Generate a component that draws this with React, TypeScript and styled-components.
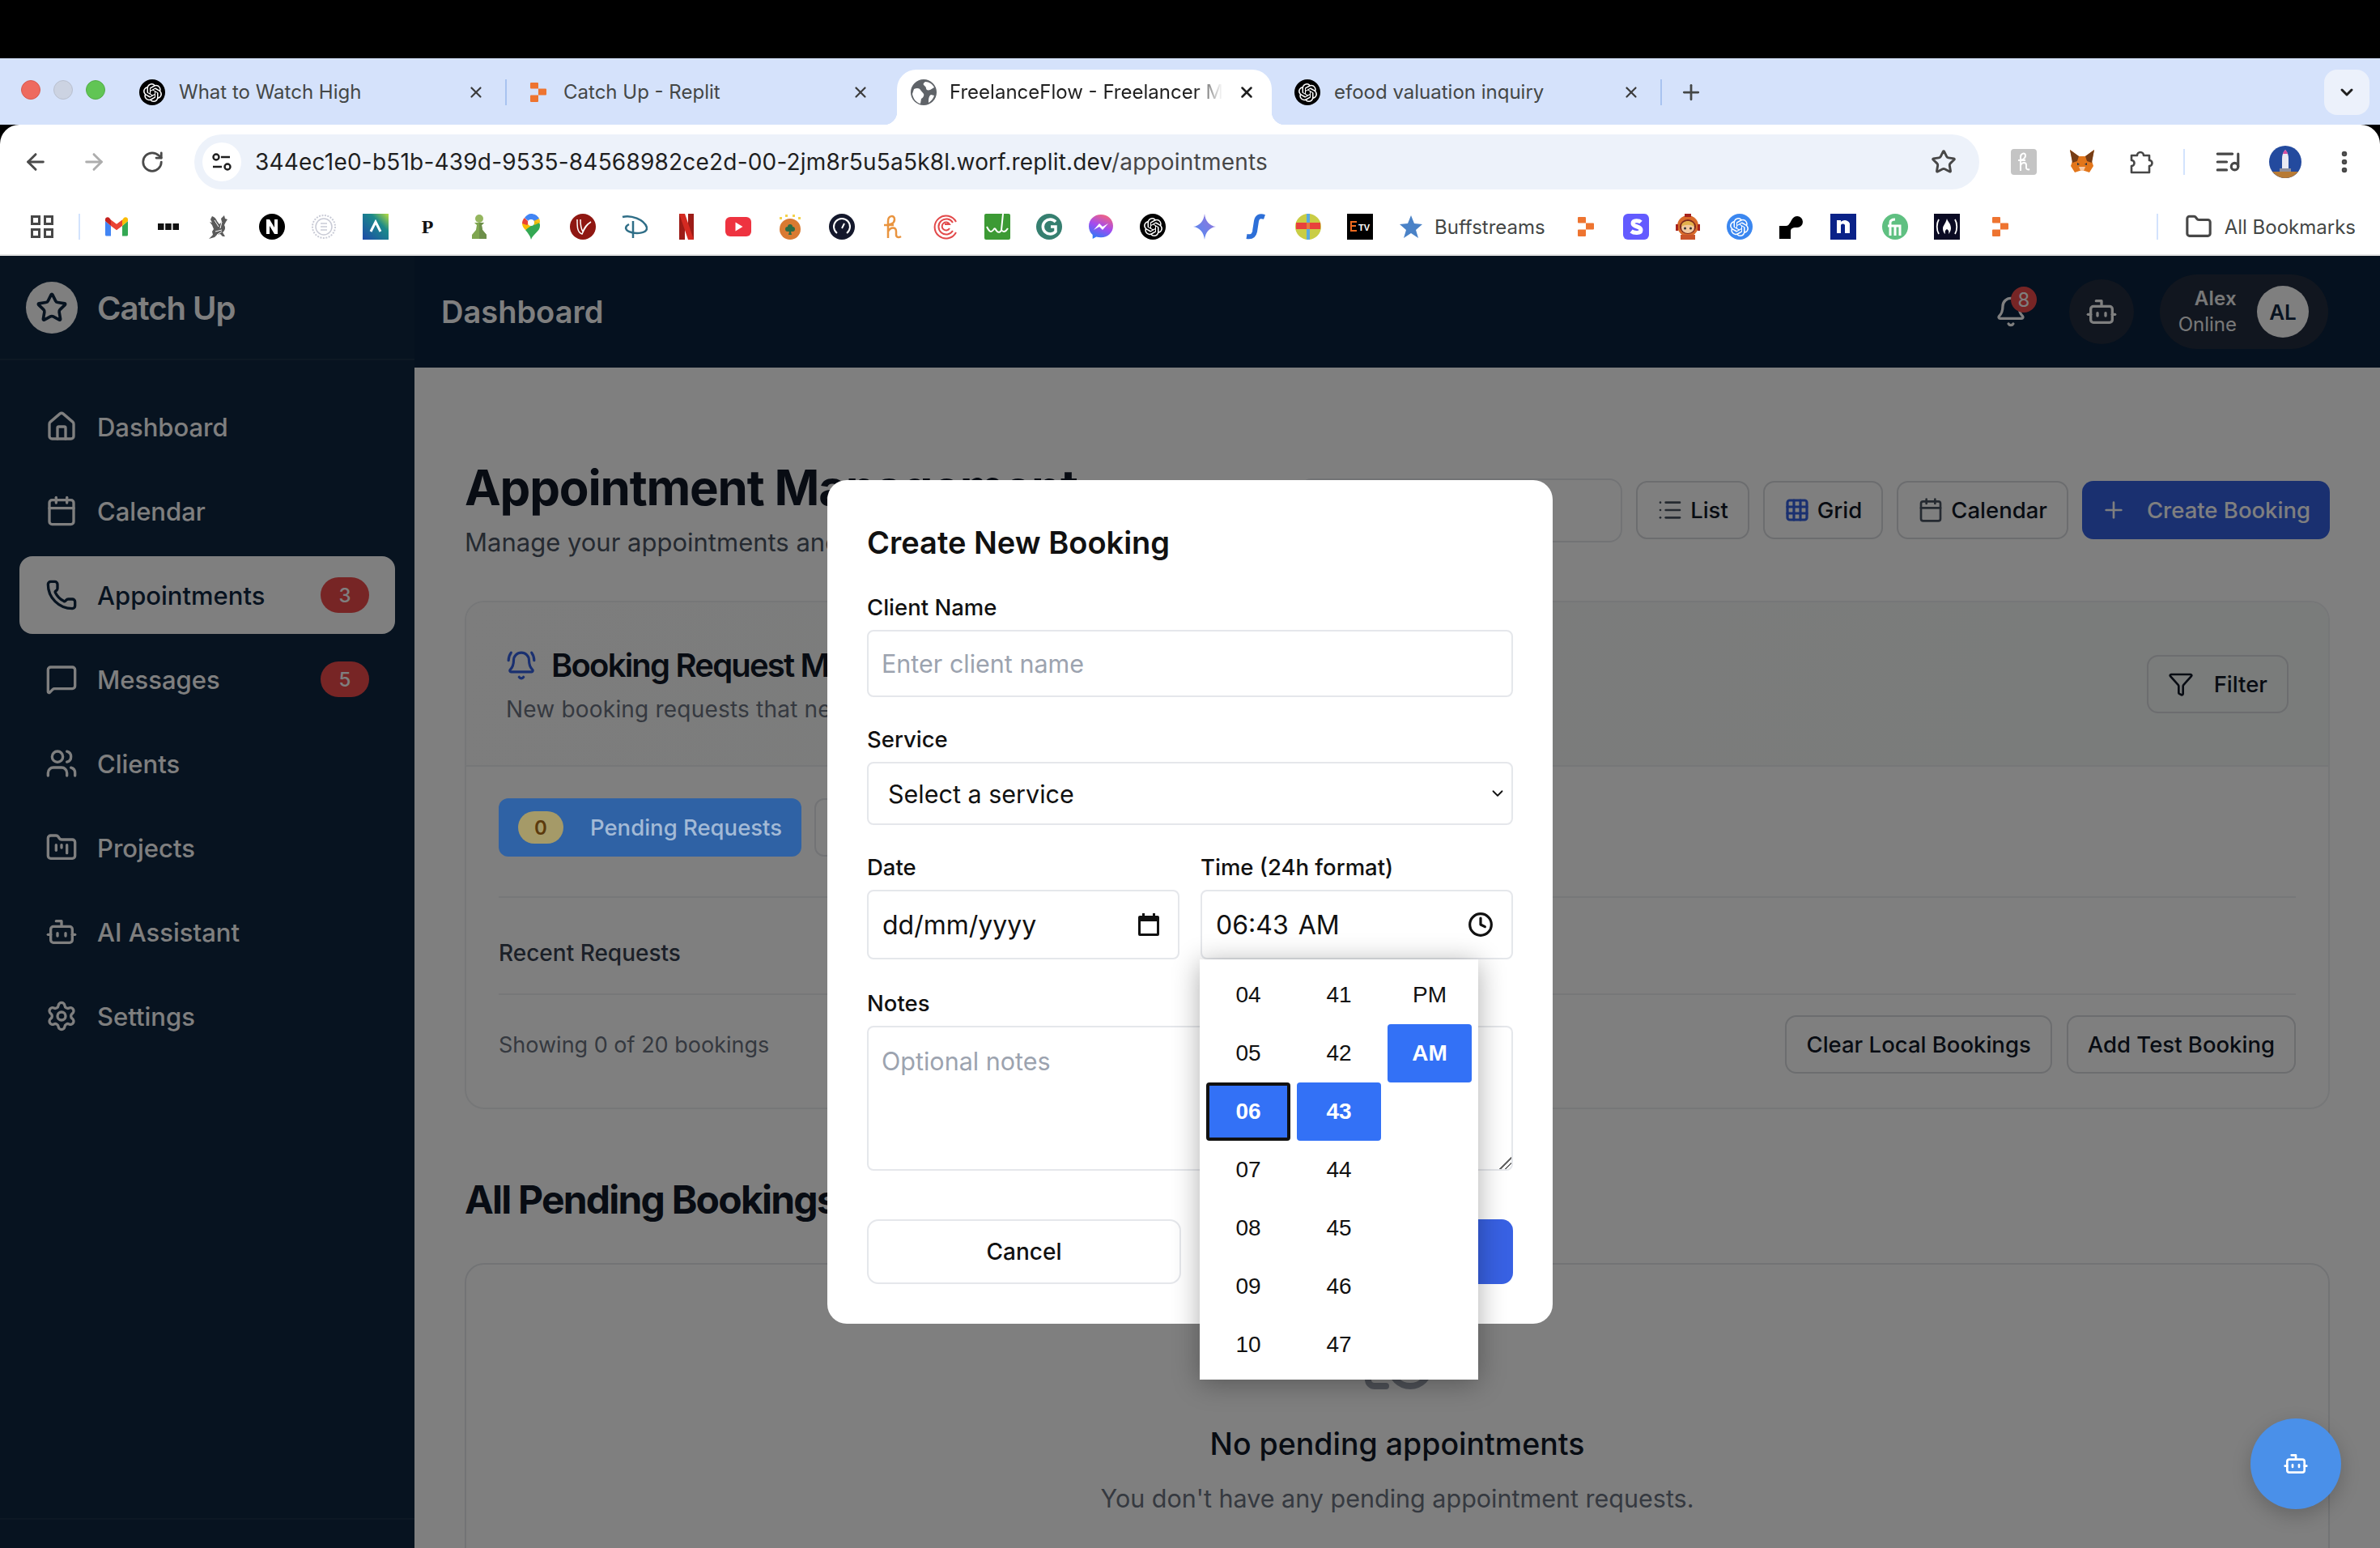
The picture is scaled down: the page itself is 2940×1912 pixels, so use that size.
import styled, { createGlobalStyle } from 'styled-components'
import {
  ArrowLeft,
  ArrowRight,
  Bell,
  BellRing,
  Bot,
  Calendar,
  CalendarClock,
  ChevronDown,
  Clock,
  EllipsisVertical,
  Filter,
  Folder,
  FolderKanban,
  Grid3x3,
  House,
  List,
  ListMusic,
  MessageSquare,
  Phone,
  Plus,
  RotateCw,
  Settings,
  Star,
  Users,
  X,
} from 'lucide-react'
import { SiOpenai } from 'react-icons/si'

const GlobalStyle = createGlobalStyle`
  html, body {
    margin: 0;
    padding: 0;
    background: #000;
  }
  * {
    box-sizing: border-box;
  }
  body {
    font-family: Inter, 'Noto Sans', sans-serif;
  }
`

const Screen = styled.div`
  width: 2940px;
  height: 1912px;
  display: flex;
  flex-direction: column;
  overflow: hidden;
  position: relative;
`

const BlackBar = styled.div`
  height: 72px;
  flex: none;
  background: #000;
`

// ─── Browser chrome ─────────────────────────────────────────────

const TabStrip = styled.div`
  height: 82px;
  flex: none;
  background: #d5e2fb;
  display: flex;
  padding-top: 14px;
  position: relative;
`

const Lights = styled.div`
  width: 151px;
  flex: none;
  display: flex;
  gap: 16px;
  padding: 13px 0 0 26px;
`

const Light = styled.span<{ $color: string; $edge: string }>`
  width: 24px;
  height: 24px;
  border-radius: 50%;
  background: ${(p) => p.$color};
  border: 1px solid ${(p) => p.$edge};
`

const Tab = styled.div<{ $active?: boolean; $sep?: boolean }>`
  width: 475px;
  height: 68px;
  flex: none;
  position: relative;
  display: flex;
  align-items: flex-start;
  padding: 12px 24px 0 21px;
  gap: 17px;
  font-size: 24px;
  line-height: 32px;
  color: ${(p) => (p.$active ? '#1f1f1f' : '#444746')};

  ${(p) =>
    p.$active &&
    `
    background: #fff;
    border-radius: 24px 24px 0 0;
    margin: 0 7px;
    width: 463px;
    padding-left: 17px;
    padding-right: 17px;
    gap: 16px;
    &::before, &::after {
      content: '';
      position: absolute;
      bottom: 0;
      width: 16px;
      height: 16px;
    }
    &::before {
      left: -16px;
      background: radial-gradient(circle at 0 0, transparent 16px, #fff 16.5px);
    }
    &::after {
      right: -16px;
      background: radial-gradient(circle at 100% 0, transparent 16px, #fff 16.5px);
    }
  `}

  ${(p) =>
    p.$sep &&
    `
    &::after {
      content: '';
      position: absolute;
      right: 0;
      top: 12px;
      width: 2px;
      height: 32px;
      background: #a8c3f0;
    }
  `}
`

const TabTitle = styled.span<{ $fade?: boolean }>`
  flex: 1;
  min-width: 0;
  white-space: nowrap;
  overflow: hidden;
  ${(p) =>
    p.$fade &&
    `
    -webkit-mask-image: linear-gradient(90deg, #000 90%, transparent 100%);
    mask-image: linear-gradient(90deg, #000 90%, transparent 100%);
  `}
`

const TabClose = styled.span`
  width: 28px;
  height: 32px;
  flex: none;
  display: flex;
  align-items: center;
  justify-content: center;
  color: #3c3c3c;
`

const NewTab = styled.div`
  width: 48px;
  height: 56px;
  margin-left: 12px;
  flex: none;
  display: flex;
  align-items: center;
  justify-content: center;
  color: #444746;
`

const TabMenu = styled.div`
  width: 56px;
  height: 56px;
  margin-left: auto;
  margin-right: 13px;
  border-radius: 16px;
  background: #ecf1fb;
  display: flex;
  align-items: center;
  justify-content: center;
  color: #1f1f1f;
`

const Toolbar = styled.div`
  height: 92px;
  flex: none;
  background: #fff;
  display: flex;
  align-items: center;
  padding-left: 8px;
  border-radius: 24px 24px 0 0;
`

const NavButton = styled.div<{ $dim?: boolean }>`
  width: 72px;
  height: 72px;
  flex: none;
  display: flex;
  align-items: center;
  justify-content: center;
  color: ${(p) => (p.$dim ? '#adadad' : '#4a4a4a')};
`

const AddressBar = styled.div`
  width: 2205px;
  height: 68px;
  margin-left: 16px;
  margin-right: 19px;
  flex: none;
  border-radius: 34px;
  background: #edf2fa;
  display: flex;
  align-items: center;
  padding: 0 28px 0 10px;
`

const SiteInfo = styled.div`
  width: 48px;
  height: 48px;
  border-radius: 50%;
  background: #fff;
  flex: none;
  display: flex;
  align-items: center;
  justify-content: center;
  margin-right: 17px;
`

const UrlText = styled.div`
  flex: 1;
  font-size: 28px;
  line-height: 36px;
  color: #1f1f1f;
  letter-spacing: 0.2px;
  white-space: nowrap;
`

const UrlPath = styled.span`
  color: #474747;
`

const ToolIcon = styled.div<{ $w?: number }>`
  width: ${(p) => p.$w ?? 72}px;
  height: 72px;
  flex: none;
  display: flex;
  align-items: center;
  justify-content: center;
  color: #474747;
`

const ToolSep = styled.div`
  width: 2px;
  height: 32px;
  margin: 0 17px;
  flex: none;
  background: #d3e3fd;
`

const Bookmarks = styled.div`
  height: 70px;
  flex: none;
  background: #fff;
  border-bottom: 2px solid #e3e3e3;
  display: flex;
  align-items: center;
  padding: 0 30px 0 20px;
`

const Mark = styled.div`
  width: 64px;
  height: 32px;
  flex: none;
  display: flex;
  align-items: center;
  justify-content: center;
`

const BookmarkSep = styled.div<{ $push?: boolean }>`
  width: 2px;
  height: 32px;
  flex: none;
  background: #d3e3fd;
  margin: 0 13px;
  ${(p) => p.$push && 'margin: 0 33px 0 auto;'}
`

const TextMark = styled.div`
  display: flex;
  align-items: center;
  gap: 15px;
  font-size: 24px;
  color: #444746;
  flex: none;
  white-space: nowrap;
`

const BuffMark = styled(TextMark)`
  gap: 13px;
  margin: 0 16px 0 15px;
`

// ─── App shell ──────────────────────────────────────────────────

const AppArea = styled.div`
  flex: 1;
  min-height: 0;
  position: relative;
  display: flex;
  background: #fff;
`

const Sidebar = styled.aside`
  width: 512px;
  flex: none;
  background: #0f2640;
  display: flex;
  flex-direction: column;
`

const LogoRow = styled.div`
  height: 129px;
  flex: none;
  display: flex;
  align-items: center;
  gap: 24px;
  padding-left: 32px;
  border-bottom: 2px solid #1a3049;
`

const LogoMark = styled.div`
  width: 64px;
  height: 64px;
  border-radius: 50%;
  background: #fff;
  color: #0f2640;
  display: flex;
  align-items: center;
  justify-content: center;
`

const LogoText = styled.span`
  font-size: 40px;
  font-weight: 600;
  letter-spacing: -1px;
  padding-top: 2px;
  color: #fff;
`

const Nav = styled.nav`
  flex: 1;
  display: flex;
  flex-direction: column;
  gap: 8px;
  padding: 34px 24px 0;
`

const NavItem = styled.div<{ $active?: boolean }>`
  height: 96px;
  display: flex;
  align-items: center;
  gap: 24px;
  padding: 0 32px;
  border-radius: 16px;
  font-size: 31px;
  font-weight: 500;
  color: ${(p) => (p.$active ? '#0f2640' : '#fff')};
  background: ${(p) => (p.$active ? '#fff' : 'transparent')};
`

const NavLabel = styled.span`
  flex: 1;
`

const NavBadge = styled.span`
  width: 60px;
  height: 44px;
  border-radius: 22px;
  background: #ef4b4b;
  color: #fff;
  font-size: 24px;
  font-weight: 500;
  display: flex;
  align-items: center;
  justify-content: center;
`

const SidebarFoot = styled.div`
  height: 37px;
  flex: none;
  border-top: 2px solid #1a3049;
`

const MainCol = styled.div`
  flex: 1;
  min-width: 0;
  display: flex;
  flex-direction: column;
`

const TopBar = styled.header`
  height: 138px;
  flex: none;
  background: #0a223e;
  display: flex;
  align-items: center;
  gap: 32px;
  padding: 0 64px 0 33px;
`

const TopTitle = styled.h1`
  flex: 1;
  margin: 0;
  font-size: 38px;
  font-weight: 600;
  color: #fff;
`

const BellButton = styled.div`
  width: 80px;
  height: 80px;
  position: relative;
  color: #fff;
  display: flex;
  align-items: center;
  justify-content: center;
`

const BellCount = styled.span`
  position: absolute;
  left: 40px;
  top: 9px;
  width: 32px;
  height: 32px;
  border-radius: 50%;
  background: #ef4b4b;
  color: #fff;
  font-size: 24px;
  display: flex;
  align-items: center;
  justify-content: center;
`

const RoundButton = styled.div`
  width: 80px;
  height: 80px;
  border-radius: 50%;
  background: #222c3e;
  color: #fff;
  display: flex;
  align-items: center;
  justify-content: center;
`

const UserPill = styled.div`
  width: 208px;
  height: 92px;
  border-radius: 46px;
  background: #222c3e;
  display: flex;
  align-items: center;
  justify-content: flex-end;
  gap: 25px;
  padding: 0 24px 0 0;
  flex: none;
`

const UserText = styled.div`
  display: flex;
  flex-direction: column;
  align-items: flex-end;
  color: #f0f0f0;
  font-size: 24px;
  line-height: 32px;
`

const UserName = styled.span`
  font-weight: 600;
  letter-spacing: 0.3px;
`

const Avatar = styled.div`
  width: 64px;
  height: 64px;
  border-radius: 50%;
  background: #fff;
  color: #0f2640;
  font-size: 26px;
  font-weight: 600;
  display: flex;
  align-items: center;
  justify-content: center;
`

const Content = styled.main`
  flex: 1;
  min-height: 0;
  overflow: hidden;
  padding: 112px 62px 0;
`

const PageHead = styled.div`
  display: flex;
  align-items: center;
  justify-content: space-between;
  margin-bottom: 48px;
`

const PageTitle = styled.h2`
  margin: 0 0 8px;
  font-size: 60px;
  line-height: 72px;
  font-weight: 700;
  letter-spacing: -1.2px;
  color: #111827;
  white-space: nowrap;
`

const PageSub = styled.p`
  margin: 0;
  font-size: 31px;
  line-height: 48px;
  color: #4b5563;
`

const HeadActions = styled.div`
  display: flex;
  align-items: center;
  gap: 17px;
`

const SearchBox = styled.div`
  width: 400px;
  height: 79px;
  border: 2px solid #e5e7eb;
  border-radius: 16px;
`

const OutlineButton = styled.div<{ $gap?: number }>`
  height: 72px;
  display: flex;
  align-items: center;
  justify-content: center;
  gap: ${(p) => p.$gap ?? 9}px;
  padding: 0 24px;
  border: 2px solid #d8dade;
  border-radius: 14px;
  font-size: 27.500px;
  font-weight: 500;
  color: #111827;
  white-space: nowrap;
  flex: none;
`

const IconDim = styled.span<{ $color?: string }>`
  display: flex;
  color: ${(p) => p.$color ?? '#4b5563'};
`

const PrimaryButton = styled.div`
  height: 72px;
  display: flex;
  align-items: center;
  gap: 25px;
  padding: 0 24px 0 23px;
  background: #3560e0;
  border-radius: 14px;
  color: #fff;
  font-size: 27.500px;
  font-weight: 500;
  white-space: nowrap;
  flex: none;
`

const Card = styled.section`
  border: 2px solid #eceef0;
  border-radius: 24px;
  overflow: hidden;
`

const CardHead = styled.div`
  height: 203px;
  background: linear-gradient(100deg, #fafafa, #f4f8f6);
  border-bottom: 2px solid #eceef0;
  display: flex;
  align-items: center;
  justify-content: space-between;
  padding: 0 49px;
`

const CardHeading = styled.div`
  padding-top: 4px;
`

const CardTitleRow = styled.div`
  display: flex;
  align-items: center;
  gap: 18px;
`

const CardTitle = styled.h3`
  margin: 0;
  font-size: 40px;
  line-height: 48px;
  font-weight: 600;
  letter-spacing: -1.8px;
  color: #111827;
  white-space: nowrap;
`

const CardSub = styled.p`
  margin: 10px 0 0;
  font-size: 28px;
  line-height: 40px;
  letter-spacing: 0.2px;
  color: #6b7280;
  white-space: nowrap;
`

const CardBody = styled.div`
  padding: 39px 40px 42px;
`

const TabRow = styled.div`
  display: flex;
  gap: 16px;
  padding-bottom: 49px;
  border-bottom: 2px solid #eceef0;
`

// sits above the dimming layer, as it does on the real page
const PendingTab = styled.div`
  position: relative;
  z-index: 40;
  height: 72px;
  width: 374px;
  flex: none;
  border-radius: 12px;
  background: #2f62a5;
  display: flex;
  align-items: center;
  gap: 33px;
  padding-left: 24px;
  color: #a3bad6;
  font-size: 27.500px;
  font-weight: 500;
`

const CountPill = styled.span`
  width: 56px;
  height: 40px;
  border-radius: 20px;
  background: #a59a68;
  color: #5c3a0c;
  font-size: 24px;
  font-weight: 600;
  display: flex;
  align-items: center;
  justify-content: center;
`

const OtherTab = styled.div`
  height: 72px;
  width: 374px;
  flex: none;
  border: 2px solid #e5e7eb;
  border-radius: 12px;
`

const RecentRow = styled.div`
  padding: 48px 0 30px;
  border-bottom: 2px solid #eceef0;
  font-size: 28px;
  line-height: 40px;
  font-weight: 500;
  color: #374151;
`

const FootRow = styled.div`
  display: flex;
  align-items: center;
  justify-content: space-between;
  padding-top: 25px;
`

const FootText = styled.span`
  font-size: 27px;
  color: #6b7280;
`

const FootActions = styled.div`
  display: flex;
  gap: 18px;
`

const SectionTitle = styled.h3`
  margin: 82px 0 48px;
  font-size: 48px;
  line-height: 60px;
  font-weight: 700;
  letter-spacing: -1.8px;
  color: #111827;
`

const EmptyCard = styled.section`
  height: 600px;
  border: 2px solid #e5e7eb;
  border-radius: 24px;
  display: flex;
  flex-direction: column;
  align-items: center;
  padding-top: 62px;
`

const EmptyIcon = styled.div`
  color: #9ca3af;
  height: 96px;
`

const EmptyTitle = styled.h4`
  margin: 36px 0 15px;
  font-size: 37.500px;
  line-height: 56px;
  font-weight: 500;
  color: #111827;
`

const EmptyText = styled.p`
  margin: 0;
  font-size: 30.500px;
  line-height: 48px;
  color: #6b7280;
`

// ─── Dialog ─────────────────────────────────────────────────────

const Overlay = styled.div`
  position: absolute;
  inset: 0;
  z-index: 30;
  background: rgba(0, 0, 0, 0.5);
`

const DialogLayer = styled.div`
  position: absolute;
  inset: 0;
  z-index: 50;
  display: flex;
  align-items: center;
  justify-content: center;
  pointer-events: none;
`

const Dialog = styled.div`
  width: 896px;
  background: #fff;
  border-radius: 24px;
  padding: 49px 49px 49px;
`

const DialogTitle = styled.h2`
  margin: 0 0 34px;
  font-size: 38px;
  line-height: 56px;
  font-weight: 600;
  color: #111;
`

const Field = styled.div<{ $tall?: boolean }>`
  position: relative;
  margin-bottom: ${(p) => (p.$tall ? 36 : 34)}px;
`

const FieldLabel = styled.label`
  display: block;
  margin-bottom: 10px;
  font-size: 27.500px;
  line-height: 36px;
  font-weight: 500;
  color: #111;
`

const TextInput = styled.input`
  display: block;
  width: 100%;
  height: 83px;
  padding: 0 16px;
  border: 2px solid #e5e7eb;
  border-radius: 8px;
  font-family: inherit;
  font-size: 30.500px;
  color: #111;
  outline: none;
  &::placeholder {
    color: #9ca3af;
  }
`

const SelectBox = styled.div`
  height: 78px;
  border: 2px solid #e5e7eb;
  border-radius: 8px;
  display: flex;
  align-items: center;
  justify-content: space-between;
  padding: 0 6px 0 24px;
  font-size: 30.500px;
  color: #111;
`

const FieldGrid = styled.div`
  display: grid;
  grid-template-columns: 386px 386px;
  column-gap: 26px;
`

const PickerBox = styled.div`
  height: 86px;
  border: 2px solid #e5e7eb;
  border-radius: 8px;
  display: flex;
  align-items: center;
  justify-content: space-between;
  padding: 0 22px 0 17px;
  font-size: 32px;
  color: #111;
`

const TimeValue = styled.span`
  word-spacing: 3px;
`

const TimePopup = styled.div`
  position: absolute;
  left: -1px;
  top: 100%;
  width: 344px;
  height: 519px;
  padding: 8px;
  background: #fff;
  box-shadow: 0 4px 32px rgba(0, 0, 0, 0.32);
  display: grid;
  grid-template-columns: repeat(3, 104px);
  column-gap: 8px;
  align-content: start;
  z-index: 2;
`

const TimeColumn = styled.div`
  display: flex;
  flex-direction: column;
`

const TimeCell = styled.div<{ $selected?: boolean; $focused?: boolean }>`
  height: 72px;
  border-radius: 4px;
  display: flex;
  align-items: center;
  justify-content: center;
  font-family: 'Liberation Sans', Arial, sans-serif;
  font-size: 28px;
  font-weight: ${(p) => (p.$selected ? 700 : 400)};
  color: ${(p) => (p.$selected ? '#fff' : '#111')};
  background: ${(p) => (p.$selected ? '#3371f6' : 'transparent')};
  border: ${(p) => (p.$focused ? '4px solid #111' : 'none')};
`

const NotesArea = styled.textarea`
  display: block;
  width: 100%;
  height: 179px;
  padding: 18px 16px;
  border: 2px solid #e5e7eb;
  border-radius: 8px;
  font-family: inherit;
  font-size: 30.500px;
  line-height: 48px;
  outline: none;
  &::placeholder {
    color: #9ca3af;
  }
  &::-webkit-resizer {
    background: linear-gradient(
      135deg,
      transparent 50%,
      #666 50%,
      #666 58%,
      transparent 58%,
      transparent 72%,
      #666 72%,
      #666 80%,
      transparent 80%
    );
  }
`

const DialogActions = styled.div`
  display: grid;
  grid-template-columns: 388px 386px;
  column-gap: 24px;
  margin-top: 60px;
`

const CancelButton = styled.div`
  height: 80px;
  border: 2px solid #e5e7eb;
  border-radius: 14px;
  display: flex;
  align-items: center;
  justify-content: center;
  font-size: 28px;
  font-weight: 500;
  color: #111;
`

const SubmitButton = styled(CancelButton)`
  border: none;
  background: #3861e3;
  color: #fff;
`

const Fab = styled.div`
  position: absolute;
  right: 48px;
  bottom: 48px;
  z-index: 40;
  width: 112px;
  height: 112px;
  border-radius: 50%;
  background: #4a90e9;
  color: #fff;
  display: flex;
  align-items: center;
  justify-content: center;
  box-shadow: 0 8px 24px rgba(0, 0, 0, 0.2);
`

// ─── Favicons ───────────────────────────────────────────────────

const FaviconDisc = styled.span<{ $bg: string }>`
  width: 32px;
  height: 32px;
  flex: none;
  border-radius: 50%;
  background: ${(p) => p.$bg};
  display: flex;
  align-items: center;
  justify-content: center;
`

const OpenAiDisc = ({ bg = '#000' }: { bg?: string }) => (
  <FaviconDisc $bg={bg}>
    <SiOpenai size={23} color="#fff" />
  </FaviconDisc>
)

const ReplitMark = () => (
  <svg width="32" height="32" viewBox="0 0 32 32">
    <path fill="#ee7430" d="M9 4h8a1 1 0 0 1 1 1v6.500H9a1 1 0 0 1-1-1V5a1 1 0 0 1 1-1ZM18 11.500h9a1 1 0 0 1 1 1v6a1 1 0 0 1-1 1h-9ZM9 19.500h9V27a1 1 0 0 1-1 1H9a1 1 0 0 1-1-1v-6.500a1 1 0 0 1 1-1Z" />
  </svg>
)

const GlobeMark = () => (
  <svg width="32" height="32" viewBox="0 0 32 32">
    <circle cx="16" cy="16" r="16" fill="#5f6368" />
    <path fill="#fff" d="M4 12c4-2 7-1 8 1s3 3 4 5-1 5-3 6l-1 6C7 29 3 24 2 18ZM18 3c5 0 9 3 11 7l-5 3c-3 1-5 0-5-2s-2-3-3-4 0-3 2-4ZM25 19l4 1c-1 4-4 7-7 9 0-4 0-8 3-10Z" />
  </svg>
)

const Svg32 = styled.svg`
  width: 32px;
  height: 32px;
  flex: none;
  display: block;
`

const Favicons: Record<string, React.ReactNode> = {
  gmail: (
    <Svg32 viewBox="0 0 32 32">
      <path fill="#4285f4" d="M2 9v17a1.500 1.500 0 0 0 1.500 1.500H9V15Z" />
      <path fill="#34a853" d="M23 15v12.500h5.500A1.500 1.500 0 0 0 30 26V9Z" />
      <path fill="#ea4335" d="M9 15V7.500l7 5.300 7-5.300V15l-7 5.300Z" />
      <path fill="#fbbc04" d="M23 7.500V15l7-6V7c0-2.500-3-3.500-4.700-2.200Z" />
      <path fill="#c5221f" d="M2 9l7 6V7.500L6.700 4.800C5 3.500 2 4.500 2 7Z" />
    </Svg32>
  ),
  dots: (
    <Svg32 viewBox="0 0 32 32">
      <path fill="#111" d="M3 12h7.500v8H3ZM12.200 12h7.500v8h-7.500ZM21.500 12H29v8h-7.500Z" />
    </Svg32>
  ),
  griffin: (
    <Svg32 viewBox="0 0 32 32">
      <path fill="#5a5a5a" d="M6 3c3 1 5 3 6 6l3 4 3-3-1-4 4-4 1 4 3 1-2 3-2 4c2 3 1 7-2 9l3 5h-3l-3-3-4 1-3 3-7 2 5-5-1-4 2-3-2-5-3-4 3 1-2-4Z" />
      <path fill="none" stroke="#fff" strokeWidth="1" d="M9 8l5 8M18 10l-2 8M10 22l8-2M12 26l6-4" />
    </Svg32>
  ),
  notion: (
    <FaviconDisc $bg="#000">
      <svg width="20" height="20" viewBox="0 0 20 20">
        <path fill="#fff" d="M3 1h4l6 10V1h4v18h-4L7 9v10H3Z" />
      </svg>
    </FaviconDisc>
  ),
  pale: (
    <Svg32 viewBox="0 0 32 32" fill="none" stroke="#c9cbd6">
      <circle cx="16" cy="16" r="14" strokeWidth="2" strokeDasharray="2 1.500" />
      <circle cx="16" cy="16" r="10" strokeWidth="1.500" />
      <path strokeWidth="1.500" d="M12 12h8M12 16h8M12 20h8" />
    </Svg32>
  ),
  arrow: (
    <Svg32 viewBox="0 0 32 32">
      <defs>
        <linearGradient id="arrowBg" x1="1" y1="0" x2="0" y2="1">
          <stop offset="0" stopColor="#b9dd3e" />
          <stop offset="0.35" stopColor="#1b8a8a" />
          <stop offset="1" stopColor="#1e4aa8" />
        </linearGradient>
      </defs>
      <rect width="32" height="32" fill="url(#arrowBg)" />
      <path fill="none" stroke="#fff" strokeWidth="3" d="M10 22l6-12 6 12" />
    </Svg32>
  ),
  serifP: (
    <Svg32 viewBox="0 0 32 32">
      <text x="16" y="24" textAnchor="middle" fontFamily="Liberation Serif, serif" fontWeight="700" fontSize="24" fill="#111">
        P
      </text>
    </Svg32>
  ),
  pawn: (
    <Svg32 viewBox="0 0 32 32">
      <circle cx="16" cy="6" r="5" fill="#95b65e" />
      <path fill="#7fa650" d="M10 11h12l-3 3 1 6 5 6v5H7v-5l5-6 1-6Z" />
      <path fill="#6d8f4a" d="M16 11h6l-3 3 1 6 5 6v5h-9Z" />
    </Svg32>
  ),
  maps: (
    <Svg32 viewBox="0 0 32 32">
      <path fill="#34a853" d="M16 32c-1-5-4-8-7-12l10-11 7 2c1 1 1 3 1 4 0 7-9 10-11 17Z" />
      <path fill="#fbbc04" d="M9 20c-2-2-4-5-4-8l6-1 5 4Z" />
      <path fill="#ea4335" d="M5 12c0-3 1-5 3-7l6 6-3 3Z" />
      <path fill="#4285f4" d="M8 5c2-3 5-5 8-5 4 0 8 2 10 6l-7 5-5-1Z" />
      <path fill="#fbbc04" d="M19 9l7-3c1 2 1 3 1 5l-7 3Z" opacity="0.9" />
      <circle cx="16" cy="11" r="4" fill="#fff" />
    </Svg32>
  ),
  wine: (
    <FaviconDisc $bg="#8f1712">
      <svg width="24" height="24" viewBox="0 0 24 24" fill="none" stroke="#fff" strokeWidth="1.500">
        <path d="M5 3c0 9 0 16 6 18 2-5 6-12 11-15M9 3c0 7 1 12 3 15 2-5 5-9 9-11" />
      </svg>
    </FaviconDisc>
  ),
  disney: (
    <Svg32 viewBox="0 0 32 32" fill="none" stroke="#2f6e87" strokeWidth="2.500">
      <path d="M1 4c10-3 27 3 30 13 1 7-12 8-19 6-8-2-9-7-3-10" />
      <path d="M14 9v21" />
    </Svg32>
  ),
  netflix: (
    <Svg32 viewBox="0 0 32 32">
      <path fill="#9c1c17" d="M7 0h7v32H7ZM18 0h7v32h-7Z" />
      <path fill="#d42a21" d="M7 0h7l11 32h-7Z" />
    </Svg32>
  ),
  youtube: (
    <Svg32 viewBox="0 0 32 32">
      <rect y="4" width="32" height="24" rx="6" fill="#ee3340" />
      <path fill="#fff" d="M12.500 10.500v11l9-5.500Z" />
    </Svg32>
  ),
  ball: (
    <Svg32 viewBox="0 0 32 32">
      <circle cx="16" cy="19" r="13" fill="#d97a32" />
      <path fill="#2b6b45" d="M16 13a3 3 0 0 1 3 3 3 3 0 0 1 0 6h-2l1 4h-4l1-4h-2a3 3 0 0 1 0-6 3 3 0 0 1 3-3Z" />
      <path fill="#f3d24c" d="M3 4h3v3H3ZM10 1h3v3h-3ZM19 1h3v3h-3ZM26 4h3v3h-3Z" />
    </Svg32>
  ),
  gauge: (
    <FaviconDisc $bg="#14182c">
      <svg width="24" height="24" viewBox="0 0 24 24" fill="none" stroke="#fff" strokeWidth="2">
        <path d="M6 20a10 10 0 1 1 12 0" />
        <path d="M12 14l3-6" />
      </svg>
    </FaviconDisc>
  ),
  scriptH: (
    <Svg32 viewBox="0 0 32 32" fill="none" stroke="#e9943f" strokeWidth="2.500">
      <path d="M9 30V9c0-7 8-8 8-2 0 5-6 7-13 7h12M9 22c3-6 10-6 10 0v4c0 3 3 4 6 2" />
    </Svg32>
  ),
  spiral: (
    <Svg32 viewBox="0 0 32 32" fill="none" stroke="#e2494a" strokeWidth="2">
      <path d="M29 23A14 14 0 1 1 29 10M25 21a9.500 9.500 0 1 1 0-10M21 18a5 5 0 1 1 0-5h-6" />
    </Svg32>
  ),
  chart: (
    <Svg32 viewBox="0 0 32 32">
      <rect width="32" height="32" rx="2" fill="#3c9a34" />
      <path fill="none" stroke="#fff" strokeWidth="2" d="M3 16c3 6 5 8 8 4 2-3 2-2 4 1s5 2 6-1l2-20M21 20c2 3 5 3 8-2" />
    </Svg32>
  ),
  grammarly: (
    <FaviconDisc $bg="#367f70">
      <svg width="24" height="24" viewBox="0 0 24 24" fill="none" stroke="#fff" strokeWidth="3.500">
        <path d="M20 6a9 9 0 1 0 0 12v-6h-6" />
      </svg>
    </FaviconDisc>
  ),
  messenger: (
    <Svg32 viewBox="0 0 32 32">
      <defs>
        <linearGradient id="msgBg" x1="0.3" y1="1" x2="0.7" y2="0">
          <stop offset="0" stopColor="#2a7cf6" />
          <stop offset="0.5" stopColor="#a24bf0" />
          <stop offset="1" stopColor="#f4647e" />
        </linearGradient>
      </defs>
      <path fill="url(#msgBg)" d="M16 1C7.500 1 1 7.200 1 15.500c0 4.300 1.800 8 4.700 10.600V31l4.500-2.500c1.800.5 3.800.8 5.800.8 8.500 0 15-6.200 15-14.300S24.500 1 16 1Z" />
      <path fill="#fff" d="M7 20l7-8 4 4 7-4-7 8-4-4Z" />
    </Svg32>
  ),
  gemini: (
    <Svg32 viewBox="0 0 32 32">
      <defs>
        <linearGradient id="gemBg" x1="0" y1="1" x2="1" y2="0">
          <stop offset="0" stopColor="#4c8df5" />
          <stop offset="1" stopColor="#9a72d8" />
        </linearGradient>
      </defs>
      <path fill="url(#gemBg)" d="M16 0c1 9 6 15 14 16-8 1-13 7-14 16-1-9-6-15-14-16 8-1 13-7 14-16Z" />
    </Svg32>
  ),
  blueS: (
    <Svg32 viewBox="0 0 32 32" fill="none" stroke="#2d6fd8" strokeWidth="6">
      <path d="M26 4c-6-2-9 0-10 5l-2 13c-1 5-4 7-10 6" />
    </Svg32>
  ),
  wheel: (
    <Svg32 viewBox="0 0 32 32">
      <circle cx="16" cy="16" r="16" fill="#c9cd45" />
      <path fill="#e8413c" d="M1 11h30v8H1Z" />
      <path fill="#5aa9e0" d="M14 0h4v32h-4Z" />
      <path fill="#e8793c" d="M14 11h4v8h-4Z" />
    </Svg32>
  ),
  etv: (
    <Svg32 viewBox="0 0 32 32">
      <rect width="32" height="32" fill="#000" />
      <path fill="none" stroke="#ef6a1f" strokeWidth="2" d="M12 10H5v5h6M5 15v6h7" />
      <text x="14" y="21" fontFamily="Liberation Sans, sans-serif" fontSize="11" fontWeight="700" fill="#fff">
        TV
      </text>
    </Svg32>
  ),
  purpleS: (
    <Svg32 viewBox="0 0 32 32">
      <rect width="32" height="32" rx="6" fill="#635bff" />
      <path fill="none" stroke="#fff" strokeWidth="5" d="M22 10.500c-2-2-10-3-10 1.500s10 3 10 8-9 4-12 1.500" />
    </Svg32>
  ),
  astronaut: (
    <Svg32 viewBox="0 0 32 32">
      <circle cx="16" cy="15" r="13" fill="#d86a2a" />
      <path fill="#a7231c" d="M1 13h3v8H1ZM28 13h3v8h-3ZM12 0h8v4h-8Z" />
      <ellipse cx="16" cy="16" rx="10" ry="9" fill="#7c2a1e" />
      <ellipse cx="16" cy="17" rx="8" ry="7" fill="#f2c9a0" />
      <path fill="#e3b04c" d="M8 16c0-5 4-7 8-7s8 2 8 7c-5-3-11-3-16 0Z" />
      <circle cx="12.500" cy="18" r="1.500" fill="#333" />
      <circle cx="19.500" cy="18" r="1.500" fill="#333" />
      <path fill="#c9542a" d="M7 26h18v6H7Z" />
    </Svg32>
  ),
  blackR: (
    <Svg32 viewBox="0 0 32 32">
      <path fill="#000" d="M1 15h8c3 0 4-2 6-5 2-4 4-7 8-7a6 6 0 0 1 0 14c-4 0-8 0-8 5v9H1Z" />
    </Svg32>
  ),
  navyN: (
    <Svg32 viewBox="0 0 32 32">
      <rect width="32" height="32" fill="#0a2288" />
      <path fill="#fff" d="M8 8h5v2c1.500-2 8-4 11 2v12h-6V14c-1-2-4-2-5 0v10H8Z" />
    </Svg32>
  ),
  fi: (
    <FaviconDisc $bg="#5fc081">
      <svg width="22" height="22" viewBox="0 0 22 22" fill="none" stroke="#fff" strokeWidth="3">
        <path d="M5 22V6c0-3 2-4 6-4M2 10h15v12M11 10v12" />
      </svg>
    </FaviconDisc>
  ),
  fcc: (
    <Svg32 viewBox="0 0 32 32">
      <rect width="32" height="32" fill="#0a0a23" />
      <path fill="none" stroke="#fff" strokeWidth="1.800" d="M6 7c-3 5-3 13 0 18M26 7c3 5 3 13 0 18" />
      <path fill="#fff" d="M16 6c1 4 5 6 5 12 0 3-2 6-3 7 1-3 0-5-2-6-2 1-3 3-2 6-2-1-3-4-3-7 0-3 3-5 5-12Z" />
    </Svg32>
  ),
}

const LEFT_MARKS = [
  'gmail', 'dots', 'griffin', 'notion', 'pale', 'arrow', 'serifP', 'pawn', 'maps',
  'wine', 'disney', 'netflix', 'youtube', 'ball', 'gauge', 'scriptH', 'spiral', 'chart',
  'grammarly', 'messenger', 'openai', 'gemini', 'blueS', 'wheel', 'etv',
]

const RIGHT_MARKS = ['replit', 'purpleS', 'astronaut', 'openaiBlue', 'blackR', 'navyN', 'fi', 'fcc', 'replit']

function markFor(kind: string) {
  if (kind === 'openai') return <OpenAiDisc />
  if (kind === 'openaiBlue') return <OpenAiDisc bg="#3b87f0" />
  if (kind === 'replit') return <ReplitMark />
  return Favicons[kind]
}

const HOURS = ['04', '05', '06', '07', '08', '09', '10']
const MINUTES = ['41', '42', '43', '44', '45', '46', '47']

const NAV_ITEMS = [
  { label: 'Dashboard', icon: House },
  { label: 'Calendar', icon: Calendar },
  { label: 'Appointments', icon: Phone, active: true, badge: 3 },
  { label: 'Messages', icon: MessageSquare, badge: 5 },
  { label: 'Clients', icon: Users },
  { label: 'Projects', icon: FolderKanban },
  { label: 'AI Assistant', icon: Bot },
  { label: 'Settings', icon: Settings },
]

function BrowserChrome() {
  return (
    <>
      <BlackBar />
      <TabStrip>
        <Lights>
          <Light $color="#ee6a5f" $edge="#d9584e" />
          <Light $color="#ccd3e2" $edge="#b9c0cf" />
          <Light $color="#61c554" $edge="#52ad47" />
        </Lights>
        <Tab $sep>
          <OpenAiDisc />
          <TabTitle>What to Watch High</TabTitle>
          <TabClose>
            <X size={22} strokeWidth={2.4} />
          </TabClose>
        </Tab>
        <Tab>
          <ReplitMark />
          <TabTitle>Catch Up - Replit</TabTitle>
          <TabClose>
            <X size={22} strokeWidth={2.4} />
          </TabClose>
        </Tab>
        <Tab $active>
          <GlobeMark />
          <TabTitle $fade>FreelanceFlow - Freelancer Management</TabTitle>
          <TabClose>
            <X size={22} strokeWidth={2.8} color="#1f1f1f" />
          </TabClose>
        </Tab>
        <Tab $sep>
          <OpenAiDisc />
          <TabTitle>efood valuation inquiry</TabTitle>
          <TabClose>
            <X size={22} strokeWidth={2.4} />
          </TabClose>
        </Tab>
        <NewTab>
          <Plus size={30} strokeWidth={2.2} />
        </NewTab>
        <TabMenu>
          <ChevronDown size={24} strokeWidth={3} />
        </TabMenu>
      </TabStrip>
      <Toolbar>
        <NavButton>
          <ArrowLeft size={32} strokeWidth={2.2} />
        </NavButton>
        <NavButton $dim>
          <ArrowRight size={32} strokeWidth={2.2} />
        </NavButton>
        <NavButton>
          <RotateCw size={30} strokeWidth={2.2} />
        </NavButton>
        <AddressBar>
          <SiteInfo>
            <svg width="28" height="28" viewBox="0 0 28 28" fill="none" stroke="#1f1f1f" strokeWidth="2.4">
              <circle cx="7" cy="8" r="3.500" />
              <path d="M13 8h11M3 20h11" />
              <circle cx="21" cy="20" r="3.500" />
            </svg>
          </SiteInfo>
          <UrlText>
            344ec1e0-b51b-439d-9535-84568982ce2d-00-2jm8r5u5a5k8l.worf.replit.dev
            <UrlPath>/appointments</UrlPath>
          </UrlText>
          <Star size={32} strokeWidth={2.2} color="#474747" />
        </AddressBar>
        <ToolIcon>
          <svg width="32" height="32" viewBox="0 0 32 32">
            <rect width="32" height="32" rx="4" fill="#c4c4c4" />
            <path fill="none" stroke="#fff" strokeWidth="2" d="M12 27V10c0-5 6-6 6-2 0 4-4 6-9 6h9M12 20c2-4 7-4 7 0v3c0 2 2 3 4 2" />
          </svg>
        </ToolIcon>
        <ToolIcon>
          <svg width="32" height="32" viewBox="0 0 32 32">
            <path fill="#e2761b" d="M1 1l11 8h8l11-8-3 14 2 6-5 8-6-2h-6l-6 2-5-8 2-6Z" />
            <path fill="#763d16" d="M1 1l11 8-2 6-6 2ZM31 1L20 9l2 6 6 2Z" />
            <path fill="#f6c9a6" d="M12 22h8l-2 5h-4Z" />
            <path fill="#233447" d="M10 17l3 2-3 1ZM22 17l-3 2 3 1Z" />
          </svg>
        </ToolIcon>
        <ToolIcon>
          <svg width="32" height="32" viewBox="0 0 32 32" fill="none" stroke="#474747" strokeWidth="2.600" strokeLinejoin="round">
            <path d="M5 29V21a3.500 3.500 0 0 0 0-7V8h7a4 4 0 0 1 8 0h7v6a3.500 3.500 0 0 1 0 7v8Z" />
          </svg>
        </ToolIcon>
        <ToolSep />
        <ToolIcon>
          <ListMusic size={34} strokeWidth={2.2} />
        </ToolIcon>
        <ToolIcon $w={70}>
          <svg width="40" height="40" viewBox="0 0 40 40">
            <circle cx="20" cy="20" r="20" fill="#234a9e" />
            <path fill="#e9e9f2" d="M20 5c3 3 4 7 4 11v12h-8V16c0-4 1-8 4-11Z" />
            <path fill="#d64ea0" d="M20 5c1.500 1.500 2.500 3 3 5h-6c.5-2 1.500-3.500 3-5Z" />
            <path fill="#b77a34" d="M4 32h32a20 20 0 0 1-32 0Z" />
            <path fill="#8f8f9a" d="M13 28h14v4H13Z" />
          </svg>
        </ToolIcon>
        <ToolIcon $w={76}>
          <EllipsisVertical size={34} strokeWidth={2.6} />
        </ToolIcon>
      </Toolbar>
      <Bookmarks>
        <Mark>
          <svg width="28" height="28" viewBox="0 0 28 28" fill="none" stroke="#474747" strokeWidth="3">
            <path d="M1.500 1.500h9v9h-9ZM17.500 1.500h9v9h-9ZM1.500 17.500h9v9h-9ZM17.500 17.500h9v9h-9Z" />
          </svg>
        </Mark>
        <BookmarkSep />
        {LEFT_MARKS.map((kind) => (
          <Mark key={kind}>{markFor(kind)}</Mark>
        ))}
        <BuffMark>
          <svg width="32" height="32" viewBox="0 0 32 32">
            <path fill="#4a82c7" d="M16 2l4 10 10 1-8 7 3 10-9-6-9 6 3-10-8-7 10-1Z" />
          </svg>
          Buffstreams
        </BuffMark>
        {RIGHT_MARKS.map((kind, i) => (
          <Mark key={`${kind}-${i}`}>{markFor(kind)}</Mark>
        ))}
        <BookmarkSep $push />
        <TextMark>
          <Folder size={34} strokeWidth={2.2} color="#474747" />
          All Bookmarks
        </TextMark>
      </Bookmarks>
    </>
  )
}

function CreateBookingDialog() {
  return (
    <DialogLayer>
      <Dialog>
        <DialogTitle>Create New Booking</DialogTitle>
        <Field>
          <FieldLabel>Client Name</FieldLabel>
          <TextInput placeholder="Enter client name" readOnly />
        </Field>
        <Field>
          <FieldLabel>Service</FieldLabel>
          <SelectBox>
            Select a service
            <ChevronDown size={22} strokeWidth={2} />
          </SelectBox>
        </Field>
        <FieldGrid>
          <Field $tall>
            <FieldLabel>Date</FieldLabel>
            <PickerBox>
              dd/mm/yyyy
              <svg width="28" height="30" viewBox="0 0 28 30">
                <path fill="#111" d="M6 1h3v3h10V1h3v3h3a2 2 0 0 1 2 2v21a2 2 0 0 1-2 2H3a2 2 0 0 1-2-2V6a2 2 0 0 1 2-2h3Zm-2 10v15h20V11Z" />
              </svg>
            </PickerBox>
          </Field>
          <Field $tall>
            <FieldLabel>Time (24h format)</FieldLabel>
            <PickerBox>
              <TimeValue>06:43 AM</TimeValue>
              <Clock size={32} strokeWidth={2.4} color="#111" />
            </PickerBox>
            <TimePopup>
              <TimeColumn>
                {HOURS.map((h) => (
                  <TimeCell key={h} $selected={h === '06'} $focused={h === '06'}>
                    {h}
                  </TimeCell>
                ))}
              </TimeColumn>
              <TimeColumn>
                {MINUTES.map((m) => (
                  <TimeCell key={m} $selected={m === '43'}>
                    {m}
                  </TimeCell>
                ))}
              </TimeColumn>
              <TimeColumn>
                <TimeCell>PM</TimeCell>
                <TimeCell $selected>AM</TimeCell>
              </TimeColumn>
            </TimePopup>
          </Field>
        </FieldGrid>
        <FieldLabel>Notes</FieldLabel>
        <NotesArea placeholder="Optional notes" readOnly />
        <DialogActions>
          <CancelButton>Cancel</CancelButton>
          <SubmitButton>Create Booking</SubmitButton>
        </DialogActions>
      </Dialog>
    </DialogLayer>
  )
}

export default function App() {
  return (
    <Screen>
      <GlobalStyle />
      <BrowserChrome />
      <AppArea>
        <Sidebar>
          <LogoRow>
            <LogoMark>
              <Star size={40} strokeWidth={2.2} />
            </LogoMark>
            <LogoText>Catch Up</LogoText>
          </LogoRow>
          <Nav>
            {NAV_ITEMS.map(({ label, icon: Icon, active, badge }) => (
              <NavItem key={label} $active={active}>
                <Icon size={40} strokeWidth={2} />
                <NavLabel>{label}</NavLabel>
                {badge && <NavBadge>{badge}</NavBadge>}
              </NavItem>
            ))}
          </Nav>
          <SidebarFoot />
        </Sidebar>
        <MainCol>
          <TopBar>
            <TopTitle>Dashboard</TopTitle>
            <BellButton>
              <Bell size={40} strokeWidth={2} />
              <BellCount>8</BellCount>
            </BellButton>
            <RoundButton>
              <Bot size={40} strokeWidth={2} />
            </RoundButton>
            <UserPill>
              <UserText>
                <UserName>Alex</UserName>
                <span>Online</span>
              </UserText>
              <Avatar>AL</Avatar>
            </UserPill>
          </TopBar>
          <Content>
            <PageHead>
              <div>
                <PageTitle>Appointment Management</PageTitle>
                <PageSub>Manage your appointments and booking requests</PageSub>
              </div>
              <HeadActions>
                <SearchBox />
                <OutlineButton>
                  <IconDim>
                    <List size={32} strokeWidth={2} />
                  </IconDim>
                  List
                </OutlineButton>
                <OutlineButton>
                  <IconDim $color="#3560e0">
                    <Grid3x3 size={32} strokeWidth={2.4} />
                  </IconDim>
                  Grid
                </OutlineButton>
                <OutlineButton>
                  <IconDim>
                    <Calendar size={32} strokeWidth={2} />
                  </IconDim>
                  Calendar
                </OutlineButton>
                <PrimaryButton>
                  <Plus size={32} strokeWidth={2} />
                  Create Booking
                </PrimaryButton>
              </HeadActions>
            </PageHead>
            <Card>
              <CardHead>
                <CardHeading>
                  <CardTitleRow>
                    <BellRing size={38} strokeWidth={2} color="#3560e0" />
                    <CardTitle>Booking Request Management</CardTitle>
                  </CardTitleRow>
                  <CardSub>New booking requests that need your attention</CardSub>
                </CardHeading>
                <OutlineButton $gap={25}>
                  <IconDim $color="#111827">
                    <Filter size={32} strokeWidth={2} />
                  </IconDim>
                  Filter
                </OutlineButton>
              </CardHead>
              <CardBody>
                <TabRow>
                  <PendingTab>
                    <CountPill>0</CountPill>
                    Pending Requests
                  </PendingTab>
                  <OtherTab />
                </TabRow>
                <RecentRow>Recent Requests</RecentRow>
                <FootRow>
                  <FootText>Showing 0 of 20 bookings</FootText>
                  <FootActions>
                    <OutlineButton>Clear Local Bookings</OutlineButton>
                    <OutlineButton>Add Test Booking</OutlineButton>
                  </FootActions>
                </FootRow>
              </CardBody>
            </Card>
            <SectionTitle>All Pending Bookings</SectionTitle>
            <EmptyCard>
              <EmptyIcon>
                <CalendarClock size={96} strokeWidth={2} />
              </EmptyIcon>
              <EmptyTitle>No pending appointments</EmptyTitle>
              <EmptyText>You don't have any pending appointment requests.</EmptyText>
            </EmptyCard>
          </Content>
        </MainCol>
        <Overlay />
        <CreateBookingDialog />
        <Fab>
          <Bot size={32} strokeWidth={2} />
        </Fab>
      </AppArea>
    </Screen>
  )
}
